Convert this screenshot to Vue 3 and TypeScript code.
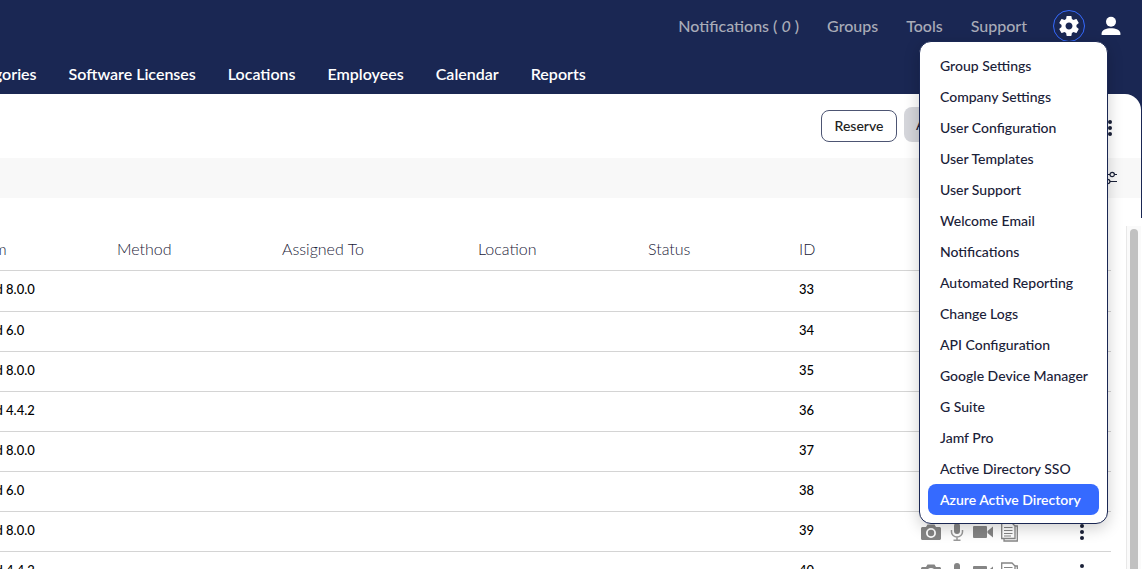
<script setup lang="ts">
const topLinks: string[] = ['Groups', 'Tools', 'Support']

const sections: string[] = [
  'Categories',
  'Software Licenses',
  'Locations',
  'Employees',
  'Calendar',
  'Reports',
]

const menuItems: string[] = [
  'Group Settings',
  'Company Settings',
  'User Configuration',
  'User Templates',
  'User Support',
  'Welcome Email',
  'Notifications',
  'Automated Reporting',
  'Change Logs',
  'API Configuration',
  'Google Device Manager',
  'G Suite',
  'Jamf Pro',
  'Active Directory SSO',
  'Azure Active Directory',
]
const activeItem = 'Azure Active Directory'

interface Device {
  id: number
  system: string
}

const devices: Device[] = [
  { id: 33, system: 'Android 8.0.0' },
  { id: 34, system: 'Android 6.0' },
  { id: 35, system: 'Android 8.0.0' },
  { id: 36, system: 'Android 4.4.2' },
  { id: 37, system: 'Android 8.0.0' },
  { id: 38, system: 'Android 6.0' },
  { id: 39, system: 'Android 8.0.0' },
  { id: 40, system: 'Android 4.4.2' },
]
</script>

<template>
  <div class="page">
    <header class="header">
      <div class="utility">
        <div class="utility-links">
          <a href="#">Notifications ( <em>0</em> )</a>
          <a v-for="link in topLinks" :key="link" href="#">{{ link }}</a>
        </div>
        <div class="account">
          <button class="icon-button ring" aria-label="Settings">
            <svg width="24" height="24" viewBox="0 0 24 24" fill="#fff">
              <path
                d="M19.43 12.98c.04-.32.07-.64.07-.98s-.03-.66-.07-.98l2.11-1.65c.19-.15.24-.42.12-.64l-2-3.46c-.12-.22-.39-.3-.61-.22l-2.49 1c-.52-.4-1.08-.73-1.69-.98l-.38-2.65C14.46 2.18 14.25 2 14 2h-4c-.25 0-.46.18-.49.42l-.38 2.65c-.61.25-1.17.59-1.69.98l-2.49-1c-.23-.09-.49 0-.61.22l-2 3.46c-.13.22-.07.49.12.64l2.11 1.65c-.04.32-.07.65-.07.98s.03.66.07.98l-2.11 1.65c-.19.15-.24.42-.12.64l2 3.46c.12.22.39.3.61.22l2.49-1c.52.4 1.08.73 1.69.98l.38 2.65c.03.24.24.42.49.42h4c.25 0 .46-.18.49-.42l.38-2.65c.61-.25 1.17-.59 1.69-.98l2.49 1c.23.09.49 0 .61-.22l2-3.46c.12-.22.07-.49-.12-.64l-2.11-1.65zM12 15.5c-1.93 0-3.5-1.57-3.5-3.5s1.57-3.5 3.5-3.5 3.5 1.57 3.5 3.5-1.57 3.5-3.5 3.5z"
              />
            </svg>
          </button>
          <button class="icon-button" aria-label="Profile">
            <svg width="20" height="20" viewBox="0 0 20 20" fill="#fff">
              <circle cx="10" cy="5.7" r="5" />
              <path d="M.6 19v-1.600c0-3.300 4.700-5.200 9.400-5.200s9.400 1.900 9.400 5.200V19z" />
            </svg>
          </button>
        </div>
      </div>
      <nav class="sections">
        <a v-for="section in sections" :key="section" href="#">{{ section }}</a>
      </nav>
      <div class="menu">
        <a
          v-for="item in menuItems"
          :key="item"
          href="#"
          :class="{ active: item === activeItem }"
          >{{ item }}</a
        >
      </div>
    </header>

    <main class="content">
      <div class="toolbar">
        <button class="reserve">Reserve</button>
        <button class="actions-button">Actions</button>
        <button class="icon-button more" aria-label="More">
          <svg width="6" height="18" viewBox="0 0 6 18" fill="#1a2138">
            <circle cx="3" cy="3" r="2" />
            <circle cx="3" cy="9" r="2" />
            <circle cx="3" cy="15" r="2" />
          </svg>
        </button>
      </div>
      <div class="filters">
        <button class="icon-button" aria-label="Filters">
          <svg width="18" height="16" viewBox="0 0 18 16" fill="none" stroke="#1a2138">
            <path d="M0 4.500h11M15.500 4.500H18M0 11.500h6M11 11.500H18" />
            <circle cx="13.200" cy="4.500" r="2.200" stroke-width="1.200" />
            <circle cx="8.700" cy="11.500" r="2.200" stroke-width="1.200" />
          </svg>
        </button>
      </div>
      <div class="listing">
        <table>
          <colgroup>
            <col class="c-system" />
            <col class="c-method" />
            <col class="c-assigned" />
            <col class="c-location" />
            <col class="c-status" />
            <col class="c-id" />
            <col />
          </colgroup>
          <thead>
            <tr>
              <th>System</th>
              <th>Method</th>
              <th>Assigned To</th>
              <th>Location</th>
              <th>Status</th>
              <th>ID</th>
              <th></th>
            </tr>
          </thead>
          <tbody>
            <tr v-for="device in devices" :key="device.id">
              <td>{{ device.system }}</td>
              <td></td>
              <td></td>
              <td></td>
              <td></td>
              <td>{{ device.id }}</td>
              <td class="actions-cell">
                <div class="row-actions">
                  <button class="icon-button" aria-label="Camera">
                    <svg width="20" height="18" viewBox="0 0 20 18" fill="#858585">
                      <path
                        fill-rule="evenodd"
                        d="M6.500 1.500h7l1.500 2.500h3.500c.8 0 1.500.7 1.500 1.500v10c0 .8-.7 1.500-1.500 1.500h-17C.7 17 0 16.300 0 15.500v-10C0 4.700.7 4 1.500 4H5zM10 5a5 5 0 1 0 0 10 5 5 0 0 0 0-10zM10 6.800a3.200 3.200 0 1 1 0 6.400 3.200 3.200 0 0 1 0-6.400z"
                      />
                    </svg>
                  </button>
                  <button class="icon-button" aria-label="Microphone">
                    <svg width="16" height="20" viewBox="0 0 16 20" fill="none" stroke="#999" stroke-width="1.500">
                      <rect x="5" y="1" width="6" height="11" rx="3" fill="#858585" stroke="none" />
                      <path d="M2.500 8v2a5.500 5 0 0 0 11 0V8M8 15v3M4.500 18.200h7" />
                    </svg>
                  </button>
                  <button class="icon-button" aria-label="Video">
                    <svg width="20" height="14" viewBox="0 0 20 14" fill="#858585">
                      <rect x="0" y="1" width="14" height="12" rx="1" />
                      <path d="M14.500 6L20 1.500v11L14.500 8z" />
                    </svg>
                  </button>
                  <button class="icon-button" aria-label="Documents">
                    <svg width="18" height="20" viewBox="1 0 18 20" fill="none" stroke="#858585">
                      <path d="M1.700 1h10.300l3 3v12.500H1.700z" stroke-width="1.300" />
                      <path d="M15 4h2.300v15H4v-2.500" stroke-width="1.300" />
                      <path d="M4 5.500h8.500M4 8.500h8.500M4 11.500h8.500M4 14h7" />
                    </svg>
                  </button>
                  <button class="icon-button row-more" aria-label="Row menu">
                    <svg width="6" height="18" viewBox="0 0 6 18" fill="#1a2138">
                      <circle cx="3" cy="3" r="2" />
                      <circle cx="3" cy="9" r="2" />
                      <circle cx="3" cy="15" r="2" />
                    </svg>
                  </button>
                </div>
              </td>
            </tr>
          </tbody>
        </table>
        <div class="scrollbar"><div class="thumb"></div></div>
      </div>
    </main>
  </div>
</template>

<style>
body {
  margin: 0;
}
</style>

<style scoped>
.page {
  height: 100vh;
  overflow: hidden;
  display: flex;
  flex-direction: column;
  background: linear-gradient(#1a2753 218px, #fff 218px);
  font-family: Lato, 'Liberation Sans', sans-serif;
  color: #1a2138;
}

a {
  color: inherit;
  text-decoration: none;
}

button {
  font: inherit;
  cursor: pointer;
}

.icon-button {
  display: flex;
  align-items: center;
  justify-content: center;
  padding: 0;
  border: 0;
  background: none;
}

.header {
  position: relative;
  color: #fff;
}

.utility {
  display: flex;
  align-items: center;
  justify-content: flex-end;
  gap: 26px;
  height: 52px;
  padding-right: 21px;
}

.utility-links {
  display: flex;
  gap: 28px;
  padding-bottom: 2px;
  color: #a9acb8;
  font-size: 16px;
  font-weight: 500;
}

.account {
  display: flex;
  align-items: center;
  gap: 16px;
}

.ring {
  box-sizing: border-box;
  width: 32px;
  height: 32px;
  border: 1px solid #356aff;
  border-radius: 50%;
}

.sections {
  display: flex;
  gap: 32px;
  height: 42px;
  margin-left: -39px;
  font-size: 16px;
  font-weight: 600;
  line-height: 44px;
  white-space: nowrap;
}

.menu {
  position: absolute;
  z-index: 2;
  top: 41px;
  right: 34px;
  display: flex;
  flex-direction: column;
  padding: 8px;
  border: 1px solid #1a2753;
  border-radius: 12px;
  background: #fff;
  box-shadow: 0 4px 16px rgba(0, 0, 0, 0.2);
  color: #1a2138;
  font-size: 14px;
  font-weight: 500;
  line-height: 31px;
  white-space: nowrap;
}

.menu a {
  padding: 0 11px 0 12px;
  border-radius: 8px;
}

.menu .active {
  background: #356aff;
  color: #fff;
  font-weight: 600;
}

.content {
  flex: 1;
  min-height: 0;
  display: flex;
  flex-direction: column;
  margin-right: 1px;
  overflow: hidden;
  border-top-right-radius: 16px;
  background: #fff;
}

.toolbar {
  flex: none;
  box-sizing: border-box;
  display: flex;
  justify-content: flex-end;
  align-items: flex-end;
  height: 64px;
  padding: 0 28px 16px 0;
  font-size: 14px;
  font-weight: 500;
}

.reserve {
  box-sizing: border-box;
  width: 76px;
  height: 32px;
  margin-right: 7px;
  padding: 0 0 1px;
  border: 1px solid #4d5573;
  border-radius: 8px;
  background: #fff;
  color: #222;
}

.actions-button {
  height: 35px;
  width: 112px;
  margin-right: 91px;
  padding: 0 12px;
  border: 0;
  border-radius: 8px;
  background: #d5d6db;
  color: #1a2138;
  text-align: left;
}

.more {
  height: 28px;
}

.filters {
  flex: none;
  display: flex;
  align-items: center;
  justify-content: flex-end;
  height: 40px;
  padding-right: 24px;
  background: #f8f8f8;
}

.listing {
  flex: 1;
  min-height: 0;
  display: flex;
  justify-content: space-between;
  overflow: hidden;
}

table {
  flex: 1;
  align-self: flex-start;
  margin: 32px 15px 0 -43px;
  border-collapse: collapse;
  table-layout: fixed;
  width: 100%;
}

.c-system {
  width: 160px;
}
.c-method {
  width: 165px;
}
.c-assigned {
  width: 196px;
}
.c-location {
  width: 170px;
}
.c-status {
  width: 151px;
}
.c-id {
  width: 122px;
}

th,
td {
  padding: 0 0 4px;
  border-bottom: 1px solid #d4d4d4;
  text-align: left;
  white-space: nowrap;
}

th {
  height: 36px;
  font-size: 16px;
  font-weight: 300;
}

td {
  height: 35px;
  color: #000;
  font-size: 13px;
  font-weight: 500;
}

tbody tr:first-child td {
  height: 36px;
}

.actions-cell {
  padding: 0;
}

.row-actions {
  display: flex;
  align-items: center;
  gap: 8px;
}

.row-more {
  margin: 0 26px 0 auto;
}

.scrollbar {
  flex: none;
  box-sizing: border-box;
  width: 15px;
  margin-top: 28px;
  padding: 3px 3px 0;
  border-left: 1px solid #e8e8e8;
  background: #fafafa;
}

.thumb {
  width: 8px;
  height: 100%;
  border-radius: 4px 4px 0 0;
  background: #c1c1c1;
}
</style>
